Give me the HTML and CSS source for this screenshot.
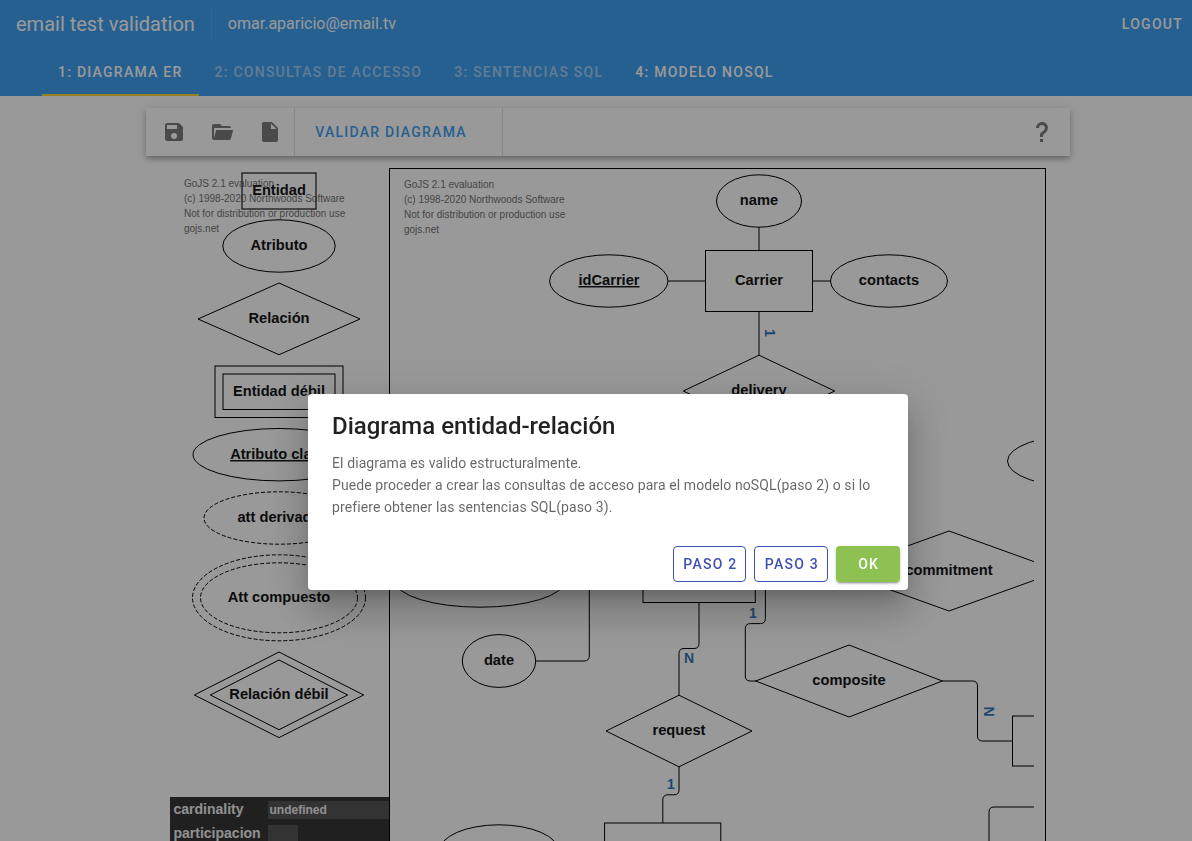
FILE: index.html
```html
<!DOCTYPE html>
<html lang="es">
<head>
<meta charset="utf-8">
<title>email test validation</title>
<link rel="stylesheet" href="styles.css">
</head>
<body>
<div class="app">
  <header class="app-bar">
    <div class="app-bar-row">
      <h1 class="app-title">email test validation</h1>
      <span class="bar-divider"></span>
      <span class="user-email">omar.aparicio@email.tv</span>
      <a class="logout">Logout</a>
    </div>
    <nav class="tabs">
      <a class="tab tab-active">1: Diagrama ER</a>
      <a class="tab tab-disabled">2: Consultas de accesso</a>
      <a class="tab tab-disabled">3: Sentencias SQL</a>
      <a class="tab">4: Modelo noSQL</a>
    </nav>
  </header>

  <main class="content">
    <div class="toolbar">
      <div class="tool-group">
        <button class="icon-btn" aria-label="Guardar"><svg class="icon" viewBox="0 0 24 24"><path d="M15,9H5V5H15M12,19A3,3 0 0,1 9,16A3,3 0 0,1 12,13A3,3 0 0,1 15,16A3,3 0 0,1 12,19M17,3H5C3.89,3 3,3.9 3,5V19A2,2 0 0,0 5,21H19A2,2 0 0,0 21,19V7L17,3Z"/></svg></button>
        <button class="icon-btn" aria-label="Abrir"><svg class="icon" viewBox="0 0 24 24"><path d="M19,20H4C2.89,20 2,19.1 2,18V6C2,4.89 2.89,4 4,4H10L12,6H19A2,2 0 0,1 21,8H21L4,8V18L6.14,10H23.21L20.93,18.5C20.7,19.37 19.92,20 19,20Z"/></svg></button>
        <button class="icon-btn" aria-label="Nuevo"><svg class="icon" viewBox="0 0 24 24"><path d="M13,9V3.5L18.5,9M6,2C4.89,2 4,2.89 4,4V20A2,2 0 0,0 6,22H18A2,2 0 0,0 20,20V8L14,2H6Z"/></svg></button>
      </div>
      <div class="validate-group"><button class="validate-btn">Validar diagrama</button></div>
      <button class="icon-btn help-btn" aria-label="Ayuda"><svg class="icon" viewBox="0 0 24 24"><path d="M10,19H13V22H10V19M12,2C17.35,2.22 19.68,7.62 16.5,11.67C15.67,12.67 14.33,13.33 13.67,14.17C13,15 13,16 13,17H10C10,15.33 10,13.92 10.67,12.92C11.33,11.92 12.67,11.33 13.5,10.67C15.92,8.43 15.32,5.26 12,5A3,3 0 0,0 9,8H6A6,6 0 0,1 12,2Z"/></svg></button>
    </div>

    <div class="workspace">
      <aside class="side">
        <svg class="palette" viewBox="170 168 219 629">
          <g class="watermark">
            <text x="184" y="187.4">GoJS 2.1 evaluation</text>
            <text x="184" y="202.4">(c) 1998-2020 Northwoods Software</text>
            <text x="184" y="217.4">Not for distribution or production use</text>
            <text x="184" y="232.4">gojs.net</text>
          </g>
          <g class="shape">
            <rect class="soft" x="242" y="173" width="74" height="36"/>
            <ellipse cx="279" cy="246" rx="56.2" ry="26.2"/>
            <path d="M198 319L279 283L360 319L279 354.7Z"/>
            <rect x="215" y="366" width="128" height="51.5"/>
            <rect x="223" y="374" width="112" height="35.5"/>
            <ellipse cx="279" cy="454.7" rx="86" ry="26.2"/>
            <ellipse class="dashed" cx="279" cy="518" rx="75" ry="26.2"/>
            <ellipse class="dashed" cx="279" cy="597.8" rx="86.5" ry="43"/>
            <ellipse class="dashed" cx="279" cy="597.8" rx="78.5" ry="35"/>
            <path d="M194.3 695L279 652L363.7 695L279 737.6Z"/>
            <path d="M210.3 695L279 660L347.7 695L279 729.7Z"/>
          </g>
          <g class="label">
            <text x="279" y="195">Entidad</text>
            <text x="279" y="250">Atributo</text>
            <text x="279" y="323">Relación</text>
            <text x="279" y="396">Entidad débil</text>
            <text x="279" y="459" class="key">Atributo clave</text>
            <text x="279" y="522">att derivado</text>
            <text x="279" y="602">Att compuesto</text>
            <text x="279" y="699">Relación débil</text>
          </g>
        </svg>
        <div class="inspector">
          <span class="prop">cardinality</span><span class="value value-text">undefined</span>
          <span class="prop">participacion</span><span class="value value-check"></span>
        </div>
      </aside>

      <section class="diagram">
        <svg class="canvas" viewBox="390 169 644 672">
          <g class="watermark">
            <text x="404" y="188">GoJS 2.1 evaluation</text>
            <text x="404" y="203">(c) 1998-2020 Northwoods Software</text>
            <text x="404" y="218">Not for distribution or production use</text>
            <text x="404" y="233">gojs.net</text>
          </g>
          <g class="shape">
            <path d="M759 227V250M759 312V355M668 281H705M813 281H830"/>
            <path d="M536 661H584Q589.3 661 589.3 656V560"/>
            <path d="M699 603V643.5Q699 648.5 694 648.5H684Q679 648.5 679 653.5V695"/>
            <path d="M679 767V790Q679 794.8 674 794.8H668Q662.8 794.8 662.8 800V823"/>
            <path d="M765.4 560V618.5Q765.4 623.6 760.4 623.6H750.4Q745.3 623.6 745.3 628.6V676Q745.3 681 750.3 681H757"/>
            <path d="M942 681H972.5Q977.5 681 977.5 686V736Q977.5 741 982.5 741H1012"/>
            <path d="M1040 807H994Q989 807 989 812V850"/>
            <ellipse cx="759" cy="201" rx="42.5" ry="26.2"/>
            <ellipse cx="608.8" cy="281" rx="59.2" ry="26.2"/>
            <ellipse cx="889" cy="281" rx="58.5" ry="26.2"/>
            <rect x="705.5" y="250.5" width="107" height="61"/>
            <path d="M683.3 391L759 355.2L834.7 391L759 427Z"/>
            <ellipse cx="1082" cy="461" rx="74.5" ry="26.2"/>
            <path d="M838 571L949 531L1060 571L949 611Z"/>
            <ellipse cx="480" cy="581" rx="84.6" ry="26.2"/>
            <rect x="643" y="541.5" width="112.3" height="61"/>
            <ellipse cx="499" cy="661" rx="36.7" ry="26.4"/>
            <path d="M755.7 681L849 645L942.3 681L849 717Z"/>
            <path d="M606 731L679 695.2L752 731L679 766.8Z"/>
            <rect x="1012.5" y="716" width="80" height="50"/>
            <rect x="604.6" y="823" width="116.2" height="61"/>
            <ellipse cx="499" cy="851" rx="59.7" ry="26.2"/>
          </g>
          <g class="label">
            <text x="759" y="205">name</text>
            <text x="609" y="285" class="key">idCarrier</text>
            <text x="759" y="285">Carrier</text>
            <text x="889" y="285">contacts</text>
            <text x="759" y="395">delivery</text>
            <text x="949" y="575">commitment</text>
            <text x="499" y="665">date</text>
            <text x="849" y="685">composite</text>
            <text x="679" y="735">request</text>
          </g>
          <g class="cardinality">
            <text transform="translate(765 333) rotate(90)">1</text>
            <text x="753" y="618">1</text>
            <text x="689" y="663">N</text>
            <text x="671" y="789">1</text>
            <text transform="translate(984 711.5) rotate(90)">N</text>
          </g>
        </svg>
      </section>
    </div>
  </main>
</div>

<div class="scrim">
  <div class="dialog" role="dialog">
    <h2 class="dialog-title">Diagrama entidad-relación</h2>
    <p class="dialog-text">El diagrama es valido estructuralmente.<br>Puede proceder a crear las consultas de acceso para el modelo noSQL(paso 2) o si lo prefiere obtener las sentencias SQL(paso 3).</p>
    <div class="dialog-actions">
      <button class="btn btn-outlined">Paso 2</button>
      <button class="btn btn-outlined">Paso 3</button>
      <button class="btn btn-primary">OK</button>
    </div>
  </div>
</div>
</body>
</html>
```

FILE: styles.css
```css
* { box-sizing: border-box; }
html, body { margin: 0; height: 100%; overflow: hidden; }
body { background: #fff; font-family: Roboto, sans-serif; }
button { border: 0; padding: 0; margin: 0; background: none; font: inherit; }

.app { display: flex; flex-direction: column; height: 100vh; overflow: hidden; }

/* App bar */
.app-bar { flex: none; height: 96px; background: #40a1f2; color: #fff; }
.app-bar-row { display: flex; align-items: center; height: 48px; padding: 0 9px 0 16px; }
.app-title { margin: 0; font-size: 20px; font-weight: 400; white-space: nowrap; }
.bar-divider { width: 1px; height: 32px; margin: 0 16px; background: rgba(255, 255, 255, 0.12); }
.user-email { margin-top: -1px; font-size: 16px; }
.logout { margin-left: auto; font-size: 14px; font-weight: 500; letter-spacing: 1.25px; text-transform: uppercase; }
.tabs { display: flex; height: 48px; padding-left: 42px; }
.tab { display: flex; align-items: center; padding: 0 16px; font-size: 14px; font-weight: 500; letter-spacing: 1.25px; text-transform: uppercase; white-space: nowrap; }
.tab-active { box-shadow: inset 0 -2px #fdd835; }
.tab-disabled { color: rgba(255, 255, 255, 0.5); }

/* Toolbar */
.content { flex: 1; display: flex; flex-direction: column; width: 924px; margin-left: 146px; padding-top: 12px; min-height: 0; }
.toolbar { flex: none; display: flex; height: 48px; background: #fff; box-shadow: 0 2px 4px -1px rgba(0, 0, 0, 0.2), 0 4px 5px rgba(0, 0, 0, 0.14), 0 1px 10px rgba(0, 0, 0, 0.12); }
.tool-group { display: flex; width: 149px; padding-left: 3.5px; border-right: 1px solid #e0e0e0; }
.icon-btn { flex: none; display: flex; align-items: center; justify-content: center; width: 48px; height: 48px; }
.icon { width: 24px; height: 24px; fill: #7c7c7c; }
.validate-group { display: flex; align-items: center; justify-content: center; width: 208px; padding-right: 15px; border-right: 1px solid #e0e0e0; }
.validate-btn { color: #40a1f2; font-size: 14px; font-weight: 500; letter-spacing: 1.25px; text-transform: uppercase; }
.help-btn { margin: 0 4.5px 0 auto; }

/* Palette, inspector and diagram */
.workspace { flex: 1; display: flex; margin-top: 12px; padding: 0 24px; min-height: 0; }
.side { display: flex; flex-direction: column; width: 219px; overflow: hidden; }
.palette { flex: none; display: block; width: 219px; height: 629px; }
.diagram { width: 657px; border: 1px solid #000; border-bottom: 0; overflow: hidden; }
.canvas { display: block; width: 644px; height: 672px; }
.shape { fill: none; stroke: #000; stroke-width: 1; }
.soft { stroke: #3c3c3c; stroke-width: 1.4; }
.dashed { stroke-dasharray: 4 2; }
.watermark { fill: #747474; font: 10px "Liberation Sans", Arial, sans-serif; }
.label { fill: #141414; font: bold 14.667px "Liberation Sans", Arial, sans-serif; text-anchor: middle; }
.key { text-decoration: underline; }
.cardinality { fill: #337ab7; font: bold 14px "Liberation Sans", Arial, sans-serif; text-anchor: middle; }
.inspector { flex: none; display: grid; grid-template-columns: 94.5px 150px; grid-auto-rows: 18px; row-gap: 6px; align-items: center; height: 60px; padding: 4px 4px 4px 3.5px; background: #363636; color: #f0f0f0; font: bold 14px "Liberation Sans", Arial, sans-serif; }
.prop { line-height: 17px; margin-top: -1px; }
.value { height: 18px; background: #555; }
.value-text { padding-left: 1.5px; font-size: 12px; line-height: 18px; }
.value-check { width: 30px; }

/* Dialog */
.scrim { position: fixed; inset: 0; padding: 394px 0 0 308px; background: rgba(0, 0, 0, 0.4); }
.dialog { display: flex; flex-direction: column; width: 600px; height: 196px; padding: 16px 8px 8px 24px; border-radius: 4px; background: #fff; box-shadow: 0 11px 15px -7px rgba(0, 0, 0, 0.2), 0 24px 38px 3px rgba(0, 0, 0, 0.14), 0 9px 46px 8px rgba(0, 0, 0, 0.12); }
.dialog-title { margin: 0; color: rgba(0, 0, 0, 0.87); font-size: 24px; font-weight: 500; line-height: 32px; }
.dialog-text { margin: 10px 16px 0 0; color: rgba(0, 0, 0, 0.6); font-size: 14px; line-height: 22px; letter-spacing: 0.1px; }
.dialog-actions { display: flex; justify-content: flex-end; gap: 8px; margin-top: auto; }
.btn { height: 36px; padding: 0 8px 0 9.3px; border-radius: 4px; font-size: 14px; font-weight: 500; letter-spacing: 1.25px; text-transform: uppercase; white-space: nowrap; }
.btn-outlined { border: 1px solid #3f51b5; color: #3f51b5; }
.btn-primary { min-width: 64px; background: #8dc252; color: #fff; box-shadow: 0 3px 1px -2px rgba(0, 0, 0, 0.2), 0 2px 2px rgba(0, 0, 0, 0.14), 0 1px 5px rgba(0, 0, 0, 0.12); }
```
